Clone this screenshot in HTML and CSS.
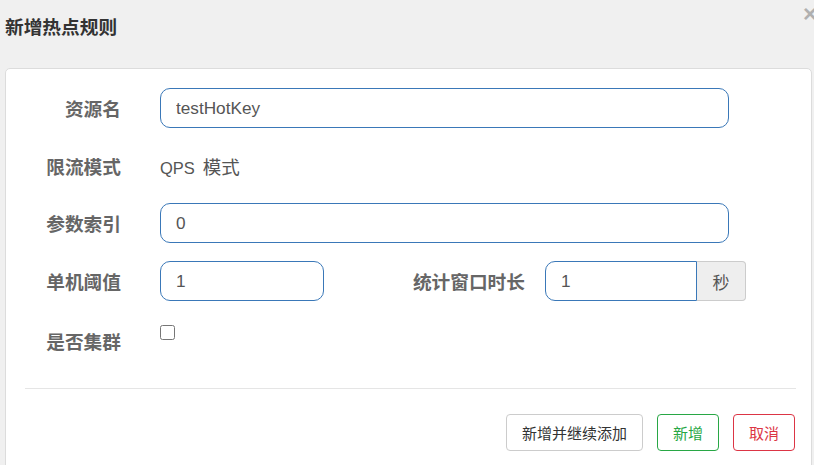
FILE: index.html
```html
<!DOCTYPE html>
<html lang="zh-CN">
<head>
<meta charset="utf-8">
<title>新增热点规则</title>
<link rel="stylesheet" href="styles.css">
</head>
<body>
<div class="header">
  <h4 class="title">新增热点规则</h4>
  <span class="close">×</span>
</div>
<div class="card">
  <div class="row">
    <label class="label">资源名</label>
    <input class="input wide" type="text" value="testHotKey">
  </div>
  <div class="row row-static">
    <label class="label">限流模式</label>
    <div class="static"><span class="latin">QPS</span><span class="gap"></span>模式</div>
  </div>
  <div class="row">
    <label class="label">参数索引</label>
    <input class="input wide" type="text" value="0">
  </div>
  <div class="row">
    <label class="label">单机阈值</label>
    <input class="input small" type="text" value="1">
    <label class="label label2">统计窗口时长</label>
    <div class="group">
      <input class="input group-input" type="text" value="1">
      <span class="addon">秒</span>
    </div>
  </div>
  <div class="row row-last">
    <label class="label label-check">是否集群</label>
    <input class="check" type="checkbox">
  </div>
  <div class="divider"></div>
  <div class="footer">
    <button class="btn btn-default">新增并继续添加</button>
    <button class="btn btn-success">新增</button>
    <button class="btn btn-danger">取消</button>
  </div>
</div>
</body>
</html>
```
FILE: styles.css
```css
html, body {
  margin: 0;
  padding: 0;
}
body {
  width: 814px;
  height: 465px;
  overflow: hidden;
  background: #f0f0f0;
  font-family: "Liberation Sans", "Noto Sans CJK SC", sans-serif;
  color: #333;
}
.header {
  position: relative;
  height: 56px;
  display: flex;
  align-items: center;
  padding-left: 5px;
}
.title {
  margin: 0;
  font-size: 18.7px;
  font-weight: bold;
  color: #333;
  line-height: 26px;
}
.close {
  position: absolute;
  left: 803px;
  top: 2px;
  font-size: 24px;
  line-height: 24px;
  color: #b0b0b0;
  font-weight: bold;
}
.card {
  margin: 12px 2px 0 5px;
  height: 420px;
  background: #fff;
  border: 1px solid #dcdcdc;
  border-radius: 5px;
  padding-top: 19px;
  box-sizing: border-box;
}
.row {
  display: flex;
  align-items: flex-start;
  margin-bottom: 18px;
  min-height: 40px;
}
.row-static {
  min-height: 39px;
}
.row-last {
  margin-bottom: 0;
}
.label {
  width: 115px;
  flex: none;
  text-align: right;
  font-size: 18.7px;
  font-weight: bold;
  color: #666;
  line-height: 26px;
  padding-top: 9px;
  box-sizing: content-box;
}
.label-check {
  padding-top: 11px;
}
.label2 {
  width: 201px;
  margin-left: 0;
}
.static {
  margin-left: 39px;
  font-size: 18.5px;
  line-height: 26px;
  padding-top: 9px;
  color: #555;
  display: flex;
}
.latin {
  font-size: 16.5px;
}
.gap {
  width: 8px;
}
.input {
  height: 40px;
  box-sizing: border-box;
  border: 1px solid #3a78b8;
  border-radius: 10px;
  padding: 0 15px;
  font-family: "Liberation Sans", "Noto Sans CJK SC", sans-serif;
  font-size: 17.2px;
  color: #555;
  background: #fff;
  outline: none;
  margin: 0;
}
.wide {
  width: 569px;
  margin-left: 39px;
}
.small {
  width: 164px;
  margin-left: 39px;
}
.group {
  display: flex;
  margin-left: 20px;
}
.group-input {
  width: 152px;
  border-radius: 10px 0 0 10px;
}
.addon {
  width: 49px;
  height: 40px;
  box-sizing: border-box;
  display: flex;
  align-items: center;
  justify-content: center;
  background: #eee;
  border: 1px solid #ccc;
  border-left: none;
  border-radius: 0 4px 4px 0;
  font-size: 17px;
  color: #555;
}
.check {
  margin: 6px 0 0 39px;
  width: 15px;
  height: 15px;
}
.divider {
  height: 1px;
  background: #e5e5e5;
  margin: 29px 15px 0 19px;
}
.footer {
  display: flex;
  justify-content: flex-end;
  gap: 14px;
  padding: 25px 16px 0 0;
}
.btn {
  height: 37px;
  padding: 0 15px;
  font-family: "Noto Sans CJK SC", sans-serif;
  font-size: 15px;
  border-radius: 4px;
  background: #fff;
  border: 1px solid #ccc;
  color: #333;
  cursor: pointer;
}
.btn-success {
  border-color: #28a745;
  color: #28a745;
}
.btn-danger {
  border-color: #dc3545;
  color: #dc3545;
}
```
